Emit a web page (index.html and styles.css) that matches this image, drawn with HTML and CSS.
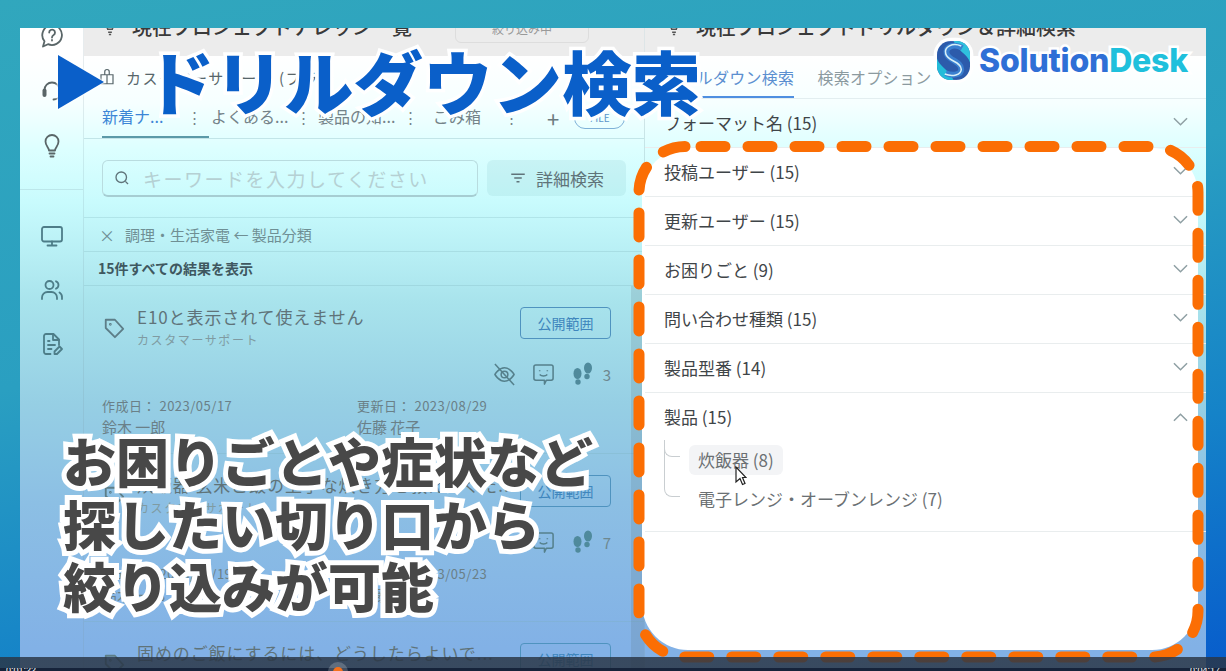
FILE: index.html
```html
<!DOCTYPE html>
<html lang="ja">
<head>
  <meta charset="UTF-8">
  <title>ドリルダウン検索</title>
  <link rel="stylesheet" href="styles.css">
</head>
<body>

<div class="screen">
  <aside class="sidebar">
    <div class="side-group">
      <svg class="side-icon icon-dark" viewBox="0 0 24 24"><path d="M12 1a10 10 0 1 1-4 19.200L3 22.500l1.500-5.300A10 10 0 0 1 12 1z"/><path d="M9.200 8.500a2.900 2.900 0 1 1 4.400 2.500c-1 .6-1.600 1.200-1.600 2.500M12 16v.5"/></svg>
      <svg class="side-icon icon-dark" viewBox="0 0 24 24"><path d="M4.500 15v-4a7.500 7.500 0 0 1 15 0v4"/><path d="M4.500 11.500v4.500" stroke-width="4"/><path d="M19.500 16c0 3-3 4.500-6 4.500" /></svg>
      <svg class="side-icon icon-dark" viewBox="0 0 24 24"><path d="M9 16.500c0-3-3.500-4.500-3.500-9a6.500 6.500 0 0 1 13 0c0 4.500-3.500 6-3.500 9z"/><path d="M9.500 19.500h5M10.500 22.500h3"/></svg>
    </div>
    <div class="side-group">
      <svg class="side-icon" viewBox="0 0 24 24"><rect x="2" y="3" width="20" height="14.500" rx="2"/><path d="M12 17.500V21M7.500 21.500h9"/></svg>
      <svg class="side-icon" viewBox="0 0 24 24"><circle cx="9.500" cy="7" r="4"/><path d="M2 21v-1.500a5.500 5.500 0 0 1 5.500-5.500h4a5.500 5.500 0 0 1 5.500 5.500V21"/><path d="M16 3.300a4 4 0 0 1 0 7.400M19.500 14.500a5.500 5.500 0 0 1 2.500 5V21"/></svg>
      <svg class="side-icon" viewBox="0 0 24 24"><path d="M10.500 22H6a2 2 0 0 1-2-2V4a2 2 0 0 1 2-2h7.500l5.500 5.500V13"/><path d="M13 2v6h6M8 9h1.500M8 13h7M8 17h3.500"/><path d="M14.500 22v-2.500l5-5 2.500 2.500-5 5z"/></svg>
    </div>
  </aside>

  <section class="panel panel-left">
    <div class="panel-head">
      <svg class="bulb" viewBox="0 0 24 24"><path d="M9 15c0-2-3-3-3-7a6 6 0 0 1 12 0c0 4-3 5-3 7zM9.500 19h5M10.500 22h3"/></svg>
      <span class="head-title">現在プロジェクトナレッジ一覧</span>
      <span class="head-pill">絞り込み中</span>
    </div>
    <div class="scope-row">
      <svg class="scope-icon" viewBox="0 0 24 24"><path d="M4 9h16v12H4zM9 9V5a3 3 0 0 1 6 0v4M12 9v12"/></svg>
      <span>カスタマーサポート (プラテ</span>
    </div>
    <nav class="tabs">
      <div class="tab tab-active"><a>新着ナ...</a><i class="dots">⋮</i></div>
      <div class="tab"><a>よくある...</a><i class="dots">⋮</i></div>
      <div class="tab"><a>製品の知...</a><i class="dots">⋮</i></div>
      <div class="tab tab-last"><a>ごみ箱</a><i class="dots">⋮</i></div>
      <span class="plus">+</span>
      <span class="tab-pill">FILE</span>
    </nav>
    <div class="search-row">
      <div class="search-box">
        <svg class="search-icon" viewBox="0 0 24 24"><circle cx="11" cy="11" r="7"/><path d="M16.500 16.500L20 20"/></svg>
        <span>キーワードを入力してください</span>
      </div>
      <div class="detail-btn">
        <svg class="filter-icon" viewBox="0 0 24 24"><path d="M3 7h18M7 12h10M10 17h4"/></svg>
        <span>詳細検索</span>
      </div>
    </div>
    <div class="filter-row"><span class="filter-x">×</span><span>調理・生活家電 ← 製品分類</span></div>
    <div class="count-row">15件すべての結果を表示</div>

    <article class="card">
      <div class="card-top">
        <svg class="tag-icon" viewBox="0 0 24 24"><path d="M3 3h10l9 10-9 9-10-10z"/><circle cx="8" cy="8" r=".5"/></svg>
        <div class="card-title">
          <h3>E10と表示されて使えません</h3>
          <p>カスタマーサポート</p>
        </div>
        <span class="scope-btn">公開範囲</span>
      </div>
      <div class="card-icons">
        <svg class="eye-icon" viewBox="0 0 24 24"><path d="M2 12s4-7 10-7 10 7 10 7-4 7-10 7-10-7-10-7z"/><circle cx="12" cy="12" r="3.500"/><path d="M2 1l20 22"/></svg>
        <svg class="smile-icon" viewBox="0 0 24 24"><path d="M4 2h16a2 2 0 0 1 2 2v12a2 2 0 0 1-2 2h-5l-2 4v-4H4a2 2 0 0 1-2-2V4a2 2 0 0 1 2-2z"/><path d="M8 7.500v1M16 7.500v1M8 12c2 2 6 2 8 0"/></svg>
        <svg class="foot-icon" viewBox="0 0 24 24"><ellipse cx="6.500" cy="11.500" rx="4" ry="5.500"/><ellipse cx="7" cy="20" rx="2.700" ry="2.700"/><ellipse cx="17" cy="6" rx="4" ry="5.500"/><ellipse cx="16" cy="14.500" rx="2.700" ry="2.700"/></svg>
        <span class="foot-count">3</span>
      </div>
      <div class="card-meta">
        <div><p>作成日： 2023/05/17</p><b>鈴木 一郎</b></div>
        <div><p>更新日： 2023/08/29</p><b>佐藤 花子</b></div>
      </div>
    </article>

    <article class="card">
      <div class="card-top">
        <svg class="tag-icon" viewBox="0 0 24 24"><path d="M3 3h10l9 10-9 9-10-10z"/><circle cx="8" cy="8" r=".5"/></svg>
        <div class="card-title">
          <h3>炊飯器 玄米ご飯の上手な炊き方を教えてくだ...</h3>
          <p>カスタマーサポート</p>
        </div>
        <span class="scope-btn">公開範囲</span>
      </div>
      <div class="card-icons">
        <svg class="smile-icon" viewBox="0 0 24 24"><path d="M4 2h16a2 2 0 0 1 2 2v12a2 2 0 0 1-2 2h-5l-2 4v-4H4a2 2 0 0 1-2-2V4a2 2 0 0 1 2-2z"/><path d="M8 7.500v1M16 7.500v1M8 12c2 2 6 2 8 0"/></svg>
        <svg class="foot-icon" viewBox="0 0 24 24"><ellipse cx="6.500" cy="11.500" rx="4" ry="5.500"/><ellipse cx="7" cy="20" rx="2.700" ry="2.700"/><ellipse cx="17" cy="6" rx="4" ry="5.500"/><ellipse cx="16" cy="14.500" rx="2.700" ry="2.700"/></svg>
        <span class="foot-count">7</span>
      </div>
      <div class="card-meta">
        <div><p>作成日： 2023/05/19</p><b>鈴木 一郎</b></div>
        <div><p>更新日： 2023/05/23</p><b>佐藤 花子</b></div>
      </div>
    </article>

    <article class="card">
      <div class="card-top">
        <svg class="tag-icon" viewBox="0 0 24 24"><path d="M3 3h10l9 10-9 9-10-10z"/><circle cx="8" cy="8" r=".5"/></svg>
        <div class="card-title">
          <h3>固めのご飯にするには、どうしたらよいで...</h3>
        </div>
        <span class="scope-btn">公開範囲</span>
      </div>
    </article>
    <div class="scrollbar"></div>
  </section>

  <section class="panel panel-right">
    <div class="panel-head">
      <svg class="bulb" viewBox="0 0 24 24"><path d="M9 15c0-2-3-3-3-7a6 6 0 0 1 12 0c0 4-3 5-3 7zM9.500 19h5M10.500 22h3"/></svg>
      <span class="head-title">現在プロジェクトドリルダウン＆詳細検索</span>
    </div>
    <nav class="right-tabs">
      <a class="rtab rtab-active">ドリルダウン検索</a>
      <a class="rtab">検索オプション</a>
    </nav>
    <div class="spot"></div>
    <div class="facet"><span>フォーマット名 (15)</span><svg class="chev" viewBox="0 0 16 10"><path d="M1 1l7 7 7-7"/></svg></div>
    <div class="facet"><span>投稿ユーザー (15)</span><svg class="chev" viewBox="0 0 16 10"><path d="M1 1l7 7 7-7"/></svg></div>
    <div class="facet"><span>更新ユーザー (15)</span><svg class="chev" viewBox="0 0 16 10"><path d="M1 1l7 7 7-7"/></svg></div>
    <div class="facet"><span>お困りごと (9)</span><svg class="chev" viewBox="0 0 16 10"><path d="M1 1l7 7 7-7"/></svg></div>
    <div class="facet"><span>問い合わせ種類 (15)</span><svg class="chev" viewBox="0 0 16 10"><path d="M1 1l7 7 7-7"/></svg></div>
    <div class="facet"><span>製品型番 (14)</span><svg class="chev" viewBox="0 0 16 10"><path d="M1 1l7 7 7-7"/></svg></div>
    <div class="facet facet-open">
      <div class="facet-head"><span>製品 (15)</span><svg class="chev" viewBox="0 0 16 10"><path d="M1 9l7-7 7 7"/></svg></div>
      <div class="tree">
        <div class="tree-item"><span class="chip">炊飯器 (8)</span></div>
        <div class="tree-item"><span class="plain">電子レンジ・オーブンレンジ (7)</span></div>
      </div>
    </div>
  </section>

  <!-- telop over the video -->
  <div class="title-mark"></div>
  <h1 class="telop-title">ドリルダウン検索</h1>
  <p class="telop-text">お困りごとや症状など<br>探したい切り口から<br>絞り込みが可能</p>

  <svg class="dash" viewBox="0 0 580 530">
    <rect x="9" y="8.500" width="559" height="510.500" rx="46"/>
  </svg>

  <svg class="cursor" viewBox="0 0 12 20"><path d="M1 1v15l4-3.500 2.500 6 2.500-1-2.500-6H11z"/></svg>

  <div class="logo">
    <svg class="logo-mark" viewBox="0 0 34 40">
      <defs>
        <clipPath id="logoClip"><rect width="34" height="40" rx="14"/></clipPath>
      </defs>
      <rect width="34" height="40" rx="14" fill="#fff" stroke="#fff" stroke-width="7"/>
      <g clip-path="url(#logoClip)">
        <rect width="34" height="40" fill="#2c5bab"/>
        <path d="M17 0h17v22C31 13 22 11 17 0z" fill="#2fc1dd"/>
        <path d="M17 40H0V18c3 9 12 11 17 22z" fill="#23bcd9"/>
        <path d="M26 7C17 2 8 6 10 13c2 7 15 8 15 16 0 6-9 7-16 4" fill="none" stroke="#3a7fcf" stroke-width="6"/>
        <path d="M25 5C16 1 7 6 9 13c2 8 16 8 16 16 0 6-9 8-17 5" fill="none" stroke="#d8f0f8" stroke-width="1.600"/>
      </g>
    </svg>
    <span class="logo-text"><span class="logo-a">Solution</span><span class="logo-b">Desk</span></span>
  </div>
</div>

<div class="player">
  <span class="time">0:01:22</span>
  <span class="knob"></span>
  <span class="time">0:04:17</span>
</div>

</body>
</html>
```

FILE: styles.css
```css
* {
  margin: 0;
  padding: 0;
  box-sizing: border-box;
}

html, body {
  height: 671px;
  overflow: hidden;
}

body {
  position: relative;
  background: linear-gradient(168deg, #31a7bd 0%, #2a9fc1 42%, #1583c8 72%, #075ccc 100%);
  font-family: "Noto Sans CJK JP", "Noto Sans", sans-serif;
  color: #44525a;
  padding: 28px 20px 0;
}

.screen {
  position: relative;
  display: flex;
  width: 1186px;
  height: 643px;
  overflow: hidden;
  background: linear-gradient(180deg, #fff 28px, #f6ffff 75px, #dcffff 122px, #c8fbfd 175px, #a8e3ec 275px, #96cfe4 375px, #8cbfe4 475px, #82b1e6 620px);
}

/* left rail */
.sidebar {
  width: 64px;
  flex: none;
  border-right: 1px solid rgba(120, 150, 160, .18);
  margin-top: -4px;
}

.side-group {
  display: flex;
  flex-direction: column;
  align-items: center;
  gap: 31px;
  padding-bottom: 31px;
  border-bottom: 1px solid rgba(120, 150, 160, .2);
  margin-bottom: 34px;
}

.side-group:last-child {
  border: 0;
  gap: 30px;
}

.side-icon {
  width: 24px;
  height: 24px;
  fill: none;
  stroke: #4d7d88;
  stroke-width: 1.800;
  stroke-linejoin: round;
  stroke-linecap: round;
}

.icon-dark {
  stroke: #5a6668;
}

/* panels */
.panel {
  position: relative;
  width: 561px;
  flex: none;
}

.panel-left {
  border-right: 1px solid rgba(120, 150, 160, .25);
}

.panel-head {
  display: flex;
  align-items: center;
  gap: 13px;
  height: 28px;
  padding-left: 17px;
  background: #ececec;
  overflow: hidden;
}

.panel-right .panel-head {
  padding-left: 20px;
}

.bulb {
  width: 18px;
  height: 18px;
  flex: none;
  margin-top: -30px;
  fill: none;
  stroke: #555;
  stroke-width: 2;
}

.head-title {
  margin-top: -30px;
  font-size: 20px;
  line-height: 26px;
  font-weight: 500;
  white-space: nowrap;
  color: #3a3a3a;
}

.head-pill {
  margin: -28px 0 0 30px;
  padding: 0 36px;
  font-size: 12px;
  line-height: 27px;
  color: #999;
  border: 1px solid #ddd;
  border-radius: 6px;
}

.scope-row {
  display: flex;
  align-items: center;
  gap: 10px;
  height: 42px;
  padding-left: 14px;
  font-size: 15px;
  letter-spacing: 1.500px;
  color: #57666a;
}

.scope-icon {
  width: 18px;
  height: 18px;
  fill: none;
  stroke: #57666a;
  stroke-width: 1.600;
}

.tabs {
  display: flex;
  align-items: center;
  height: 41px;
  padding-left: 18px;
  border-bottom: 1px solid rgba(120, 170, 180, .3);
  font-size: 16px;
  color: #748389;
}

.tab {
  display: flex;
  align-items: center;
  justify-content: space-between;
  align-self: stretch;
  width: 107px;
  padding: 0 8px 4px 2px;
  white-space: nowrap;
}

.tab-active {
  color: #3c86d6;
  padding-left: 0;
  padding-right: 8px;
  padding-bottom: 2px;
  border-bottom: 2px solid #5b9aa8;
}

.tab-active .dots {
  color: #748389;
  margin-right: 2px;
}

.tab-last {
  width: 93px;
  padding-left: 10px;
  padding-right: 0;
}

.dots {
  font-style: normal;
  width: 12px;
  text-align: center;
  font-size: 15px;
}

.plus {
  margin-left: 31px;
  font-size: 22px;
  line-height: 22px;
  color: #6b7b80;
}

.tab-pill {
  margin-left: 15px;
  width: 51px;
  height: 22px;
  border: 1px solid #7fb1d8;
  border-radius: 11px;
  font-size: 10px;
  line-height: 20px;
  text-align: center;
  color: #5b95c9;
}

.search-row {
  display: flex;
  gap: 9px;
  padding: 21px 18px 20px;
  border-bottom: 1px solid rgba(120, 170, 180, .25);
}

.search-box {
  display: flex;
  align-items: center;
  gap: 12px;
  width: 376px;
  height: 37px;
  padding-left: 10px;
  border: 1px solid #b9dcdf;
  border-bottom: 2px solid #a6cdd2;
  border-radius: 6px;
  font-size: 19px;
  letter-spacing: 1.500px;
  color: #b5d0d3;
}

.search-icon, .filter-icon {
  width: 18px;
  height: 18px;
  flex: none;
  fill: none;
  stroke: #60747a;
  stroke-width: 1.800;
}

.detail-btn {
  display: flex;
  align-items: center;
  justify-content: center;
  gap: 9px;
  width: 139px;
  height: 36px;
  border-radius: 6px;
  background: rgba(150, 210, 215, .25);
  font-size: 17px;
  color: #5f7379;
}

.filter-row {
  display: flex;
  align-items: center;
  gap: 10px;
  height: 34px;
  padding-left: 15px;
  font-size: 15px;
  color: #6f8f94;
  border-bottom: 1px solid rgba(120, 170, 180, .25);
}

.filter-x {
  font-size: 16px;
  line-height: 16px;
}

.count-row {
  height: 34px;
  padding-left: 14px;
  font-size: 14px;
  line-height: 33px;
  font-weight: 700;
  color: #3f5860;
  border-bottom: 1px solid rgba(120, 170, 180, .25);
}

/* result cards */
.card {
  height: 168px;
  padding: 21px 33px 0 18px;
  border-bottom: 1px solid rgba(120, 170, 180, .25);
}

.card-top {
  display: flex;
  align-items: flex-start;
  gap: 11px;
}

.tag-icon {
  width: 22px;
  height: 22px;
  flex: none;
  margin: 10px 1px 0;
  fill: none;
  stroke: #5d7e88;
  stroke-width: 2;
  stroke-linejoin: round;
}

.card-title {
  flex: 1;
  min-width: 0;
  margin-top: -2px;
}

.card-title h3 {
  font-size: 17px;
  line-height: 24px;
  font-weight: 400;
  letter-spacing: .9px;
  white-space: nowrap;
  overflow: hidden;
  color: #5f7379;
}

.card-title p {
  font-size: 12px;
  line-height: 22px;
  letter-spacing: 1.600px;
  color: #7f9ba2;
}

.scope-btn {
  flex: none;
  width: 91px;
  height: 32px;
  border: 1px solid #4f93bf;
  border-radius: 4px;
  font-size: 14px;
  line-height: 30px;
  text-align: center;
  color: #3f86bd;
}

.card-icons {
  display: flex;
  align-items: center;
  justify-content: flex-end;
  gap: 16px;
  height: 24px;
  margin-top: 11px;
}

.eye-icon, .smile-icon {
  width: 23px;
  height: 23px;
  fill: none;
  stroke: #55808c;
  stroke-width: 1.600;
  stroke-linejoin: round;
}

.foot-icon {
  width: 24px;
  height: 24px;
  fill: #4f8a9c;
}

.foot-count {
  margin-left: -8px;
  font-size: 15px;
  color: #6e8890;
}

.card-meta {
  display: grid;
  grid-template-columns: 255px 1fr;
  margin-top: 10px;
  font-size: 13px;
  color: #6a8088;
}

.card-meta p {
  line-height: 20px;
  letter-spacing: .5px;
}

.card-meta b {
  display: block;
  font-size: 15px;
  line-height: 22px;
  font-weight: 400;
}

.scrollbar {
  position: absolute;
  top: 258px;
  right: 0;
  width: 13px;
  height: 385px;
  background: rgba(90, 110, 120, .18);
}

/* drilldown side */
.right-tabs {
  display: flex;
  gap: 23px;
  height: 43px;
  padding-left: 19px;
  border-bottom: 1px solid #e3eef0;
  font-size: 16px;
  line-height: 42px;
  letter-spacing: .3px;
  color: #8b9a9f;
}

.rtab-active {
  color: #5b8fd0;
  border-bottom: 2px solid #4f8fe0;
  height: 42px;
}

.spot {
  position: absolute;
  top: 120px;
  left: -3px;
  width: 556px;
  height: 502px;
  background: #fff;
  border-radius: 46px;
}

.facet {
  position: relative;
  display: flex;
  align-items: center;
  justify-content: space-between;
  height: 49px;
  padding: 0 18px 2px 19px;
  border-bottom: 1px solid #e9edee;
  font-size: 17px;
  color: #3f4548;
}

.chev {
  width: 15px;
  height: 10px;
  fill: none;
  stroke: #8fa0a4;
  stroke-width: 1.600;
}

.facet-open {
  display: block;
  height: 139px;
  padding-bottom: 0;
}

.facet-head {
  display: flex;
  align-items: center;
  justify-content: space-between;
  height: 47px;
}

.tree {
  position: relative;
  padding-left: 25px;
}

.tree::before {
  content: "";
  position: absolute;
  left: 0;
  top: 0;
  width: 15px;
  height: 56px;
  border-left: 1px solid #c9ced1;
  border-bottom: 1px solid #c9ced1;
  border-bottom-left-radius: 8px;
}

.tree::after {
  content: "";
  position: absolute;
  left: 0;
  top: 0;
  width: 15px;
  height: 16px;
  border-left: 1px solid #c9ced1;
  border-bottom: 1px solid #c9ced1;
  border-bottom-left-radius: 8px;
}

.tree-item {
  height: 39px;
  display: flex;
  align-items: center;
}

.chip, .plain {
  padding: 0 9px;
  line-height: 30px;
  border-radius: 6px;
  color: #6b7073;
}

.chip {
  background: #f3f4f6;
}

/* telop */
.title-mark {
  position: absolute;
  top: 27px;
  left: 38px;
  width: 0;
  height: 0;
  border-left: 46px solid #0a5fc9;
  border-top: 27px solid transparent;
  border-bottom: 27px solid transparent;
  filter: drop-shadow(0 0 1px #fff) drop-shadow(0 0 1px #fff);
}

.telop-title {
  position: absolute;
  top: 10px;
  left: 125px;
  font-size: 69.500px;
  line-height: 84px;
  font-weight: 900;
  white-space: nowrap;
  color: #0a5fc9;
  -webkit-text-stroke: 7px #fff;
  paint-order: stroke fill;
}

.telop-text {
  position: absolute;
  top: 401px;
  left: 43px;
  font-size: 53px;
  line-height: 62.500px;
  font-weight: 900;
  white-space: nowrap;
  color: #484848;
  -webkit-text-stroke: 10px #fff;
  paint-order: stroke fill;
}

.dash {
  position: absolute;
  top: 110px;
  left: 610px;
  width: 580px;
  height: 530px;
  fill: none;
  stroke: #fb6e04;
  stroke-width: 11;
  stroke-linecap: round;
  stroke-dasharray: 24 23;
  stroke-dashoffset: -16;
}

.cursor {
  position: absolute;
  top: 438px;
  left: 715px;
  width: 12px;
  height: 20px;
  fill: #fff;
  stroke: #222;
  stroke-width: 1.200;
}

.logo {
  position: absolute;
  top: 12px;
  left: 917px;
  display: flex;
  align-items: center;
  gap: 9px;
}

.logo-mark {
  width: 33px;
  height: 39px;
  flex: none;
  overflow: visible;
}

.logo-text {
  font-family: Inter, sans-serif;
  font-size: 32px;
  line-height: 41px;
  font-weight: 800;
  letter-spacing: -.2px;
  -webkit-text-stroke: 5px #fff;
  paint-order: stroke fill;
}

.logo-a {
  color: #2f6fd6;
}

.logo-b {
  color: #1fc0dc;
}

/* player bar */
.player {
  position: absolute;
  left: 0;
  right: 0;
  top: 657px;
  height: 14px;
  display: flex;
  align-items: flex-end;
  justify-content: space-between;
  padding: 0 6px;
  background: linear-gradient(180deg, rgba(42, 54, 70, .84) 0, rgba(42, 54, 70, .84) 11px, #16233a 11px);
}

.time {
  font-family: "Liberation Sans", sans-serif;
  font-size: 9px;
  line-height: 4px;
  height: 3px;
  overflow: hidden;
  color: #fff;
}

.knob {
  position: absolute;
  left: 333px;
  top: 10px;
  width: 10px;
  height: 10px;
  border-radius: 50%;
  background: #f4701c;
  box-shadow: 0 0 0 5px rgba(255, 255, 255, .2);
}
```
